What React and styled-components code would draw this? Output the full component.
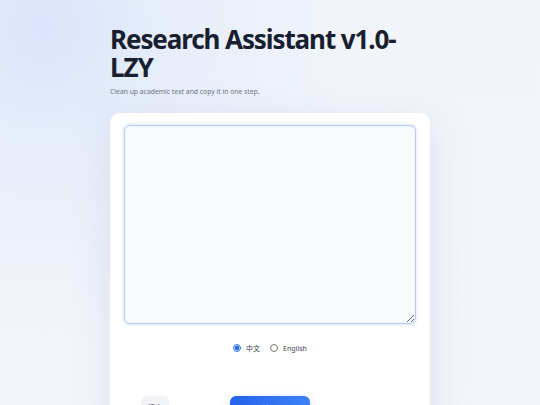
import React, { useState } from "react";
import styled, { createGlobalStyle } from "styled-components";

const GlobalStyle = createGlobalStyle`
  html, body {
    margin: 0;
    padding: 0;
  }
  body {
    min-height: 405px;
    font-family: "Noto Sans", "Noto Sans CJK SC", sans-serif;
    background:
      radial-gradient(circle at 8% 6%, rgba(210, 225, 250, 0.8) 0, rgba(222, 232, 250, 0.5) 20%, rgba(240, 244, 251, 0) 48%),
      linear-gradient(180deg, #f1f4fa 0%, #f3f5fa 100%);
    overflow: hidden;
  }
`;

const Page = styled.div`
  width: 320px;
  margin: 0 auto;
  padding-top: 25px;
`;

const Title = styled.h1`
  margin: 0;
  font-size: 26px;
  line-height: 28px;
  font-weight: 700;
  letter-spacing: -1.1px;
  color: #18202f;
`;

const Subtitle = styled.p`
  margin: 6px 0 0;
  font-size: 6.8px;
  line-height: 10px;
  color: #6b7485;
`;

const Card = styled.div`
  margin-top: 16px;
  background: #ffffff;
  border-radius: 10px;
  padding: 12px 14px 40px;
  box-shadow: 0 10px 40px rgba(120, 140, 190, 0.18);
`;

const TextArea = styled.textarea`
  display: block;
  box-sizing: border-box;
  width: 100%;
  height: 199px;
  resize: vertical;
  padding: 8px 8px;
  border: 1px solid #b2c9ef;
  border-radius: 6px;
  background: #f8fafd;
  font-family: inherit;
  font-size: 9px;
  color: #1f2937;
  outline: none;
  box-shadow: 0 0 0 2px rgba(110, 155, 230, 0.1);
`;

const RadioRow = styled.div`
  display: flex;
  justify-content: center;
  align-items: center;
  gap: 10px;
  margin-top: 19px;
`;

const RadioLabel = styled.label`
  display: flex;
  align-items: center;
  gap: 5px;
  font-size: 7px;
  color: #3b4352;
  cursor: pointer;
`;

const RadioInput = styled.input`
  margin: 0;
  width: 8px;
  height: 8px;
  accent-color: #2f6fe6;
`;

const Actions = styled.div`
  display: grid;
  grid-template-columns: 1fr auto 1fr;
  align-items: start;
  margin-top: 43px;
`;

const GhostButton = styled.button`
  justify-self: start;
  margin-left: 17px;
  height: 22px;
  padding: 0 7px;
  border: none;
  border-radius: 5px;
  background: #f1f3f7;
  color: #4b5563;
  font-family: inherit;
  font-size: 7px;
`;

const PrimaryButton = styled.button`
  width: 80px;
  height: 24px;
  border: none;
  border-radius: 6px;
  background: linear-gradient(90deg, #2563eb 0%, #3b82f6 100%);
  color: #ffffff;
  font-family: inherit;
  font-size: 8px;
  font-weight: 600;
  box-shadow: 0 4px 10px rgba(37, 99, 235, 0.25);
`;

function App() {
  const [text, setText] = useState("");
  const [lang, setLang] = useState("zh");

  return (
    <>
      <GlobalStyle />
      <Page>
        <Title>Research Assistant v1.0-LZY</Title>
        <Subtitle>Clean up academic text and copy it in one step.</Subtitle>
        <Card>
          <TextArea autoFocus value={text} onChange={(e) => setText(e.target.value)} />
          <RadioRow>
            <RadioLabel>
              <RadioInput type="radio" name="lang" checked={lang === "zh"} onChange={() => setLang("zh")} />
              中文
            </RadioLabel>
            <RadioLabel>
              <RadioInput type="radio" name="lang" checked={lang === "en"} onChange={() => setLang("en")} />
              English
            </RadioLabel>
          </RadioRow>
          <Actions>
            <GhostButton onClick={() => setText("")}>清空</GhostButton>
            <PrimaryButton>处理</PrimaryButton>
          </Actions>
        </Card>
      </Page>
    </>
  );
}

export default App;
